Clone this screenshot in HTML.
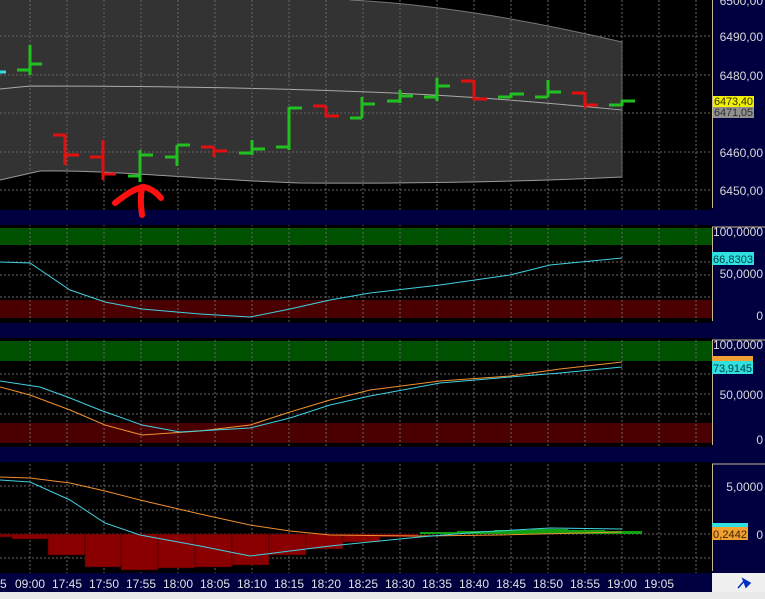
<!DOCTYPE html>
<html><head><meta charset="utf-8"><style>
html,body{margin:0;padding:0;background:#000;width:765px;height:599px;overflow:hidden}
svg{display:block}
text{font-family:"Liberation Sans",sans-serif}
</style></head><body>
<svg width="765" height="599" viewBox="0 0 765 599" xmlns="http://www.w3.org/2000/svg">
<rect width="765" height="599" fill="#000"/>
<path d="M0,0 L350,0 C450,5 550,25 622,42 L622,177 C560,180 450,184 300,183 C200,180 120,170 40,171 L0,180 Z" fill="#333333"/>
<path d="M0,180 L40,171 C120,170 200,180 300,183 C450,184 560,180 622,177" stroke="#9a9a9a" fill="none"/>
<path d="M350,0 C450,5 550,25 622,42 L622,177" stroke="#777" fill="none"/>
<path d="M0,89 L30,86 C200,86 350,90 450,96 C520,100 580,106 622,110" stroke="#aaa" fill="none"/>
<rect x="0" y="228" width="712" height="17" fill="#005200"/>
<rect x="0" y="300" width="712" height="18" fill="#4a0000"/>
<rect x="0" y="341" width="712" height="20" fill="#005200"/>
<rect x="0" y="423" width="712" height="20" fill="#4a0000"/>
<g stroke="#666" stroke-dasharray="2,2" stroke-width="1">
<path d="M30,0V573M67,0V573M104,0V573M141,0V573M178,0V573M215,0V573M252,0V573M289,0V573M326,0V573M363,0V573M400,0V573M437,0V573M474,0V573M511,0V573M548,0V573M585,0V573M622,0V573M659,0V573M696,0V573"/>
<path d="M0,36H712M0,75H712M0,113H712M0,152H712M0,190H712M0,262H712M0,275H712M0,297H712M0,374H712M0,394H712M0,414H712M0,486H712M0,510H712M0,534H712M0,558H712"/>
</g>
<rect x="0" y="210" width="765" height="15" fill="#000040"/>
<rect x="0" y="323" width="765" height="15" fill="#000040"/>
<rect x="0" y="447" width="765" height="15" fill="#000040"/>
<rect x="0" y="573" width="765" height="19" fill="#000040"/>
<rect x="0" y="592" width="765" height="7" fill="#e8e8e8"/>
<rect x="712" y="0" width="53" height="210" fill="#000040"/>
<rect x="712" y="225" width="53" height="98" fill="#000040"/>
<rect x="712" y="338" width="53" height="109" fill="#000040"/>
<rect x="712" y="462" width="53" height="111" fill="#000040"/>
<g stroke="#c8b890" fill="none"><path d="M712.5,0V208M712.5,227V321M712.5,340V445M712.5,464V571M712,227H765M712,340H765M712,464H765"/></g>
<rect x="712" y="573" width="53" height="19" fill="#f0f0f0"/>
<path d="M738,588 L745,580 M743,579 L750,583 L746,587 Z" stroke="#0030c0" fill="#0030c0" stroke-width="1.5"/>
<g fill="#d8d8d8" font-size="12" text-anchor="end">
<text x="763" y="5">6500,00</text>
<text x="763" y="41">6490,00</text>
<text x="763" y="80">6480,00</text>
<text x="763" y="157">6460,00</text>
<text x="763" y="195">6450,00</text>
<text x="763" y="236">100,0000</text>
<text x="763" y="278">50,0000</text>
<text x="763" y="320">0</text>
<text x="763" y="349">100,0000</text>
<text x="763" y="399">50,0000</text>
<text x="763" y="444">0</text>
<text x="763" y="491">5,0000</text>
<text x="763" y="539">0</text>
</g>
<rect x="713" y="96" width="41" height="11" fill="#f0f000"/>
<rect x="713" y="107" width="41" height="11" fill="#909090"/>
<text x="714" y="105" font-size="11" fill="#303000" textLength="39">6473,40</text>
<text x="714" y="116" font-size="11" fill="#303030" textLength="39">6471,05</text>
<rect x="712" y="252" width="42" height="13" fill="#30e0e0"/>
<text x="713" y="263" font-size="11" fill="#004040" textLength="40">66,8303</text>
<rect x="712" y="356" width="41" height="8" fill="#f0a030"/>
<rect x="712" y="361" width="41" height="13" fill="#30e0e0"/>
<text x="713" y="372" font-size="11" fill="#004040" textLength="39">73,9145</text>
<rect x="712" y="523" width="36" height="5" fill="#30e0e0"/>
<rect x="712" y="527" width="36" height="13" fill="#f0a030"/>
<text x="713" y="538" font-size="11" fill="#402000" textLength="34">0,2442</text>
<g fill="#e0e0e0" font-size="12" text-anchor="middle">
<text x="0" y="588">55</text><text x="30" y="588">09:00</text><text x="67" y="588">17:45</text><text x="104" y="588">17:50</text><text x="141" y="588">17:55</text><text x="178" y="588">18:00</text><text x="215" y="588">18:05</text><text x="252" y="588">18:10</text><text x="289" y="588">18:15</text><text x="326" y="588">18:20</text><text x="363" y="588">18:25</text><text x="400" y="588">18:30</text><text x="437" y="588">18:35</text><text x="474" y="588">18:40</text><text x="511" y="588">18:45</text><text x="548" y="588">18:50</text><text x="585" y="588">18:55</text><text x="622" y="588">19:00</text><text x="659" y="588">19:05</text>
</g>
<g stroke-width="3" fill="none">
<path stroke="#30e0e0" d="M0,72H6"/>
<path stroke="#20c020" d="M30,45V75M17,70H30M30,64H42"/>
<path stroke="#e01010" d="M65,134V165M53,135H65M65,155H79"/>
<path stroke="#e01010" d="M103,140V180M90,157H103M103,174H116"/>
<path stroke="#20c020" d="M140,150V182M128,176H140M140,155H153"/>
<path stroke="#20c020" d="M177,145V166M165,157H177M177,145H190"/>
<path stroke="#e01010" d="M214,147V157M201,147H214M214,151H227"/>
<path stroke="#20c020" d="M252,140V155M239,153H252M252,149H265"/>
<path stroke="#20c020" d="M289,107V150M276,147H289M289,108H302"/>
<path stroke="#e01010" d="M326,106V117M313,106H326M326,116H339"/>
<path stroke="#20c020" d="M362,97V118M350,118H362M362,104H375"/>
<path stroke="#20c020" d="M400,90V103M387,101H400M400,96H413"/>
<path stroke="#20c020" d="M437,78V101M424,97H437M437,86H450"/>
<path stroke="#e01010" d="M474,80V100M461,81H474M474,99H487"/>
<path stroke="#20c020" d="M511,93V98M498,97H511M511,94H524"/>
<path stroke="#20c020" d="M548,80V97M535,97H548M548,92H561"/>
<path stroke="#e01010" d="M585,92V108M572,93H585M585,105H598"/>
<path stroke="#20c020" d="M622,100V106M609,105H622M622,101H635"/>
</g>
<path d="M115,203 C125,195 135,188 144,187 C150,188 157,193 161,198 M142,188 C140,198 141,207 142,215" stroke="#ff1010" stroke-width="6" fill="none" stroke-linecap="round"/>
<polyline fill="none" stroke="#40d0e0" points="0,262 30,263 70,290 105,302 142,309 200,314 250,317 290,309 330,300 370,293 440,285 510,275 550,265 622,258"/>
<polyline fill="none" stroke="#f09030" points="0,387 30,395 70,410 105,425 142,435 200,431 250,425 290,412 330,400 370,390 440,381 510,376 560,369 622,362"/>
<polyline fill="none" stroke="#40d0e0" points="0,381 40,387 70,398 100,410 142,425 180,432 250,428 290,418 330,405 370,396 440,383 510,377 560,373 622,367"/>
<g fill="#8a0000" stroke="#300000" stroke-width="0.5">
<rect x="0" y="534" width="12" height="3"/><rect x="12" y="534" width="36" height="5"/><rect x="48" y="534" width="37" height="21"/><rect x="85" y="534" width="36" height="33"/><rect x="121" y="534" width="37" height="36"/><rect x="158" y="534" width="37" height="34"/><rect x="195" y="534" width="37" height="33"/><rect x="232" y="534" width="37" height="31"/><rect x="269" y="534" width="37" height="21"/><rect x="306" y="534" width="37" height="15"/><rect x="343" y="534" width="37" height="8"/><rect x="380" y="534" width="38" height="3"/>
</g>
<g fill="#10a010">
<rect x="420" y="532" width="37" height="2"/><rect x="457" y="531" width="37" height="3"/><rect x="494" y="530" width="37" height="4"/><rect x="531" y="529" width="37" height="5"/><rect x="568" y="530" width="37" height="4"/><rect x="605" y="531" width="37" height="3"/><rect x="622" y="531" width="17" height="3"/>
</g>
<polyline fill="none" stroke="#f09030" points="0,477 30,478 70,483 105,491 140,500 200,514 250,525 290,531 330,535 420,536 500,535 622,532"/>
<polyline fill="none" stroke="#40d0e0" points="0,480 30,482 70,500 105,523 140,535 200,546 250,556 290,551 330,546 420,537 480,532 550,528 622,529"/>
</svg>
</body></html>
